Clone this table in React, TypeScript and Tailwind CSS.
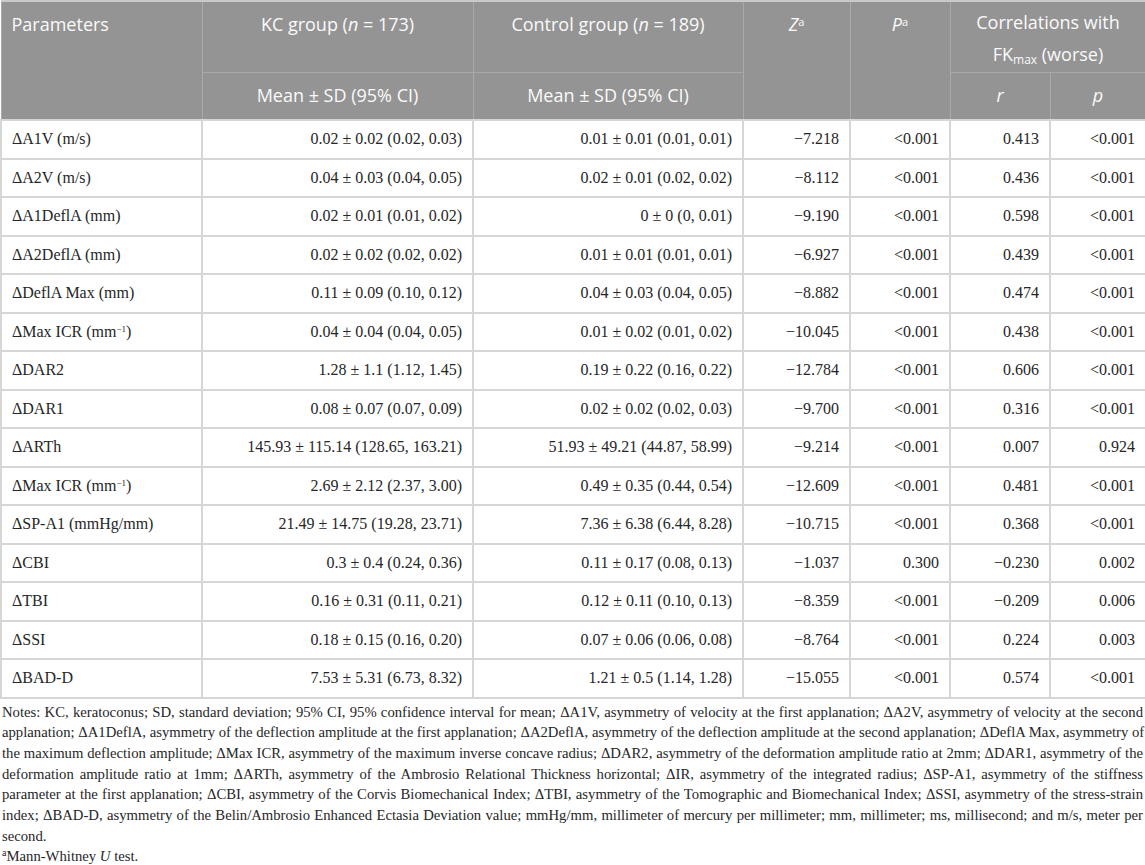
import React from "react";

type Row = {
  name: React.ReactNode;
  kc: string;
  ctrl: string;
  z: string;
  p: string;
  r: string;
  pc: string;
};

const rows: Row[] = [
  { name: "ΔA1V (m/s)", kc: "0.02 ± 0.02 (0.02, 0.03)", ctrl: "0.01 ± 0.01 (0.01, 0.01)", z: "−7.218", p: "<0.001", r: "0.413", pc: "<0.001" },
  { name: "ΔA2V (m/s)", kc: "0.04 ± 0.03 (0.04, 0.05)", ctrl: "0.02 ± 0.01 (0.02, 0.02)", z: "−8.112", p: "<0.001", r: "0.436", pc: "<0.001" },
  { name: "ΔA1DeflA (mm)", kc: "0.02 ± 0.01 (0.01, 0.02)", ctrl: "0 ± 0 (0, 0.01)", z: "−9.190", p: "<0.001", r: "0.598", pc: "<0.001" },
  { name: "ΔA2DeflA (mm)", kc: "0.02 ± 0.02 (0.02, 0.02)", ctrl: "0.01 ± 0.01 (0.01, 0.01)", z: "−6.927", p: "<0.001", r: "0.439", pc: "<0.001" },
  { name: "ΔDeflA Max (mm)", kc: "0.11 ± 0.09 (0.10, 0.12)", ctrl: "0.04 ± 0.03 (0.04, 0.05)", z: "−8.882", p: "<0.001", r: "0.474", pc: "<0.001" },
  { name: <>ΔMax ICR (mm<sup className="text-[9px]">−1</sup>)</>, kc: "0.04 ± 0.04 (0.04, 0.05)", ctrl: "0.01 ± 0.02 (0.01, 0.02)", z: "−10.045", p: "<0.001", r: "0.438", pc: "<0.001" },
  { name: "ΔDAR2", kc: "1.28 ± 1.1 (1.12, 1.45)", ctrl: "0.19 ± 0.22 (0.16, 0.22)", z: "−12.784", p: "<0.001", r: "0.606", pc: "<0.001" },
  { name: "ΔDAR1", kc: "0.08 ± 0.07 (0.07, 0.09)", ctrl: "0.02 ± 0.02 (0.02, 0.03)", z: "−9.700", p: "<0.001", r: "0.316", pc: "<0.001" },
  { name: "ΔARTh", kc: "145.93 ± 115.14 (128.65, 163.21)", ctrl: "51.93 ± 49.21 (44.87, 58.99)", z: "−9.214", p: "<0.001", r: "0.007", pc: "0.924" },
  { name: <>ΔMax ICR (mm<sup className="text-[9px]">−1</sup>)</>, kc: "2.69 ± 2.12 (2.37, 3.00)", ctrl: "0.49 ± 0.35 (0.44, 0.54)", z: "−12.609", p: "<0.001", r: "0.481", pc: "<0.001" },
  { name: "ΔSP-A1 (mmHg/mm)", kc: "21.49 ± 14.75 (19.28, 23.71)", ctrl: "7.36 ± 6.38 (6.44, 8.28)", z: "−10.715", p: "<0.001", r: "0.368", pc: "<0.001" },
  { name: "ΔCBI", kc: "0.3 ± 0.4 (0.24, 0.36)", ctrl: "0.11 ± 0.17 (0.08, 0.13)", z: "−1.037", p: "0.300", r: "−0.230", pc: "0.002" },
  { name: "ΔTBI", kc: "0.16 ± 0.31 (0.11, 0.21)", ctrl: "0.12 ± 0.11 (0.10, 0.13)", z: "−8.359", p: "<0.001", r: "−0.209", pc: "0.006" },
  { name: "ΔSSI", kc: "0.18 ± 0.15 (0.16, 0.20)", ctrl: "0.07 ± 0.06 (0.06, 0.08)", z: "−8.764", p: "<0.001", r: "0.224", pc: "0.003" },
  { name: "ΔBAD-D", kc: "7.53 ± 5.31 (6.73, 8.32)", ctrl: "1.21 ± 0.5 (1.14, 1.28)", z: "−15.055", p: "<0.001", r: "0.574", pc: "<0.001" },
];

// notes wrapped the same way as the printed table
const noteLines = [
  "Notes: KC, keratoconus; SD, standard deviation; 95% CI, 95% confidence interval for mean; ΔA1V, asymmetry of velocity at the first applanation; ΔA2V, asymmetry of velocity at the second",
  "applanation; ΔA1DeflA, asymmetry of the deflection amplitude at the first applanation; ΔA2DeflA, asymmetry of the deflection amplitude at the second applanation; ΔDeflA Max, asymmetry of",
  "the maximum deflection amplitude; ΔMax ICR, asymmetry of the maximum inverse concave radius; ΔDAR2, asymmetry of the deformation amplitude ratio at 2mm; ΔDAR1, asymmetry of the",
  "deformation amplitude ratio at 1mm; ΔARTh, asymmetry of the Ambrosio Relational Thickness horizontal; ΔIR, asymmetry of the integrated radius; ΔSP-A1, asymmetry of the stiffness",
  "parameter at the first applanation; ΔCBI, asymmetry of the Corvis Biomechanical Index; ΔTBI, asymmetry of the Tomographic and Biomechanical Index; ΔSSI, asymmetry of the stress-strain",
  "index; ΔBAD-D, asymmetry of the Belin/Ambrosio Enhanced Ectasia Deviation value; mmHg/mm, millimeter of mercury per millimeter; mm, millimeter; ms, millisecond; and m/s, meter per",
];

const sans = "font-['Open_Sans',sans-serif]";
const serif = "font-['Liberation_Serif',serif]";

export default function App() {
  const th = "border border-[#a9a9a9] font-normal text-[#fafafa] text-[18px]";
  const td = "border-2 border-[#d6d6d6] h-[38.5px] px-[10px] text-[16px] text-[#262626] leading-none";

  return (
    <div className="w-[1145px] bg-white">
      <table className="w-full table-fixed border-collapse">
        <colgroup>
          <col className="w-[201px]" />
          <col className="w-[271px]" />
          <col className="w-[270px]" />
          <col className="w-[107px]" />
          <col className="w-[100px]" />
          <col className="w-[100px]" />
          <col className="w-[96px]" />
        </colgroup>
        <thead className={`bg-[#949494] ${sans}`}>
          <tr className="h-[71px]">
            <th rowSpan={2} className={`${th} border-t-2 border-t-[#c9c9c9] text-left align-top pl-[10px] pt-[9px]`}>
              Parameters
            </th>
            <th className={`${th} border-t-2 border-t-[#c9c9c9] align-top pt-[9px]`}>
              KC group (<i>n</i> = 173)
            </th>
            <th className={`${th} border-t-2 border-t-[#c9c9c9] align-top pt-[9px]`}>
              Control group (<i>n</i> = 189)
            </th>
            <th rowSpan={2} className={`${th} border-t-2 border-t-[#c9c9c9] align-top pt-[9px]`}>
              <i>Z</i>
              <sup className="text-[11px]">a</sup>
            </th>
            <th rowSpan={2} className={`${th} border-t-2 border-t-[#c9c9c9] align-top pt-[9px]`}>
              <i>P</i>
              <sup className="text-[11px]">a</sup>
            </th>
            <th colSpan={2} className={`${th} border-t-2 border-t-[#c9c9c9] align-top pt-[9px]`}>
              <div className="leading-[22px]">Correlations with</div>
              <div className="leading-[22px] mt-[10px]">
                FK<sub className="text-[12px]">max</sub> (worse)
              </div>
            </th>
          </tr>
          <tr className="h-[48px]">
            <th className={th}>Mean ± SD (95% CI)</th>
            <th className={th}>Mean ± SD (95% CI)</th>
            <th className={th}>
              <i>r</i>
            </th>
            <th className={th}>
              <i>p</i>
            </th>
          </tr>
        </thead>
        <tbody className={serif}>
          {rows.map((row, i) => (
            <tr key={i}>
              <td className={`${td} text-left`}>{row.name}</td>
              <td className={`${td} text-right`}>{row.kc}</td>
              <td className={`${td} text-right`}>{row.ctrl}</td>
              <td className={`${td} text-right`}>{row.z}</td>
              <td className={`${td} text-right`}>{row.p}</td>
              <td className={`${td} text-right`}>{row.r}</td>
              <td className={`${td} text-right`}>{row.pc}</td>
            </tr>
          ))}
        </tbody>
      </table>

      <div className={`${serif} text-[14.7px] leading-[20.7px] text-[#262626] px-[2px] pt-[3px]`}>
        {noteLines.map((line, i) => (
          <p key={i} className="whitespace-nowrap text-justify [text-align-last:justify]">
            {line}
          </p>
        ))}
        <p>second.</p>
        <p>
          <sup className="text-[10px]">a</sup>Mann-Whitney <i>U</i> test.
        </p>
      </div>
    </div>
  );
}
